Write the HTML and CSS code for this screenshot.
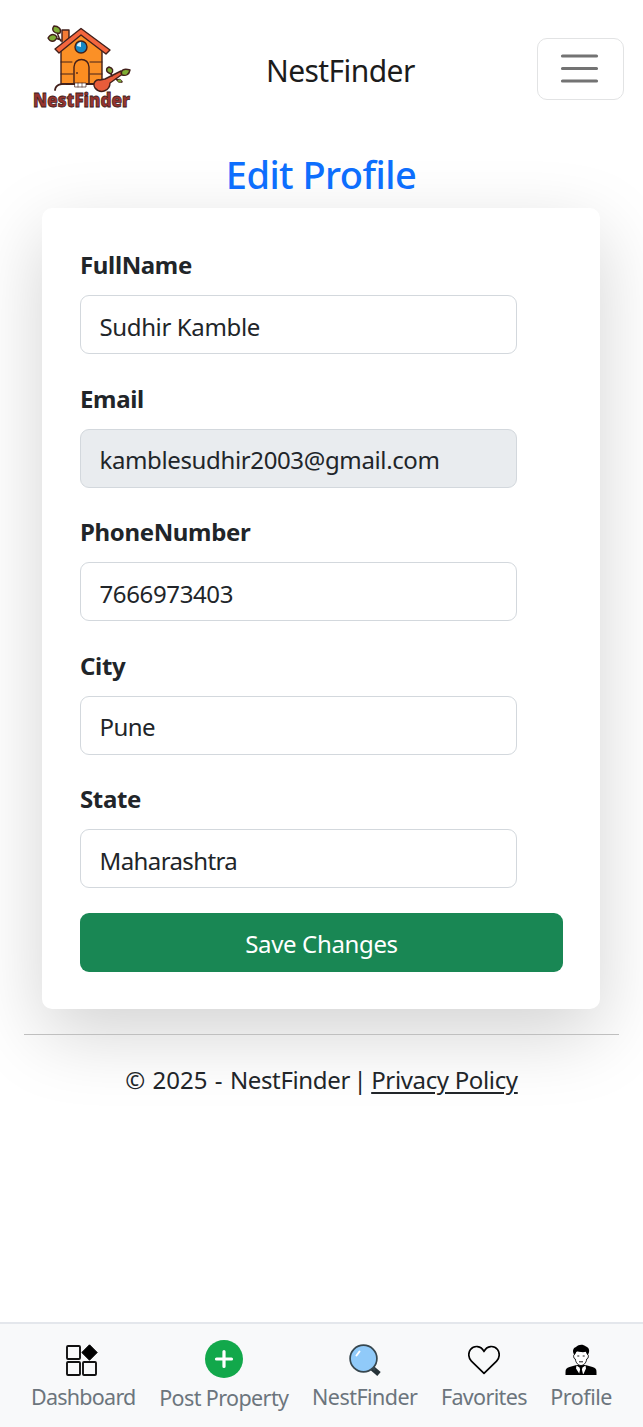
FILE: index.html
```html
<!DOCTYPE html>
<html lang="en">
<head>
<meta charset="utf-8">
<title>Edit Profile - NestFinder</title>
<link rel="stylesheet" href="styles.css">
</head>
<body>
<header class="topbar">
  <svg class="logo" viewBox="0 0 125 100" role="img" aria-label="NestFinder">
    <g stroke="#42201b" stroke-width="1.4" stroke-linejoin="round" stroke-linecap="round">
      <path d="M42 27V15h7v9" fill="#f47b35"/>
      <path d="M41 26c-3-3-3-8-5-11M41 25l-6-2" fill="none"/>
      <path d="M40 18c-6 1-9-3-6-7 4 0 8 3 6 7z" fill="#7fae35"/>
      <path d="M37 22c-2 6-7 5-9 1 3-5 7-4 9-1z" fill="#7fae35"/>
      <path d="M41 31l20-15 21 17v36H41z" fill="#fb9026"/>
      <path d="M41 47h11M41 59h12M70 47h12M70 59h12" fill="none" stroke-width="1"/>
      <path d="M54 69V52c0-10 15-10 15 0v17z" fill="#fb8d21"/>
      <path d="M35 34l26-20.500 29 21.500-4 4-25-19-22 18z" fill="#f4663e"/>
      <circle cx="61" cy="32" r="6" fill="#1688c4"/>
      <path d="M57 31c0-3 3-4 4-4v5z" fill="#d8f3fb" stroke="none"/>
      <circle cx="57" cy="58" r="1" fill="#633018" stroke="none"/>
      <path d="M35 75c1-7 8-6 13-6h27" fill="none" stroke-width="1.8"/>
      <path d="M55 68h11v4H55z" fill="#fff" stroke-width=".7"/>
      <path d="M58 68v4M62 68v4" stroke-width=".6"/>
      <path d="M75 73c-3-5 1-9 5-8l5-1 16-8 3 2-14 10c0 7-9 12-15 5z" fill="#e85c3a"/>
      <path d="M92 61l-2-5M96 64l6 3M101 58l5-1" fill="none"/>
      <path d="M91 59c-6-2-5-6-2-7 4 1 5 4 2 7z" fill="#7fae35"/>
      <path d="M102 60c-2-5 2-7 8-5-1 5-4 6-8 5z" fill="#7fae35"/>
      <path d="M97 65c3-2 5 0 5 2-3 1-5 0-5-2z" fill="#7fae35" stroke-width=".8"/>
    </g>
    <text class="logo-text" x="13" y="91.500" textLength="97" lengthAdjust="spacingAndGlyphs">NestFinder</text>
  </svg>
  <span class="brand">NestFinder</span>
  <button class="toggler" aria-label="Menu">
    <svg viewBox="0 0 46 46"><path d="M4.500 10h34M4.500 22.500h34M4.500 35h34"/></svg>
  </button>
</header>
<main class="content">
  <h1 class="title">Edit Profile</h1>
  <form class="card">
    <label class="label" for="name">FullName</label>
    <input class="field" id="name" value="Sudhir Kamble">
    <label class="label" for="email">Email</label>
    <input class="field field-readonly" id="email" value="kamblesudhir2003@gmail.com" readonly>
    <label class="label" for="phone">PhoneNumber</label>
    <input class="field" id="phone" value="7666973403">
    <label class="label" for="city">City</label>
    <input class="field field-place" id="city" value="Pune">
    <label class="label" for="state">State</label>
    <input class="field field-place" id="state" value="Maharashtra">
    <button class="save" type="button">Save Changes</button>
  </form>
</main>
<footer class="footer"><span class="year">© 2025 - </span>NestFinder<span class="bar"> | </span><a class="policy" href="#">Privacy Policy</a></footer>
<nav class="tabs">
  <a class="tab"><svg class="icon icon-dash" viewBox="0 0 32 32"><g fill="none" stroke="#111" stroke-width="1.9"><rect x="1" y="2" width="13" height="13" rx="1"/><rect x="1" y="18" width="13" height="13" rx="1"/><rect x="17" y="18" width="13" height="13" rx="1"/></g><path d="M23.500.8l7.700 7.700-7.700 7.700-7.700-7.700z" stroke="#000" stroke-linejoin="round"/></svg><span class="tab-dash">Dashboard</span></a>
  <a class="tab"><svg class="icon icon-plus" viewBox="0 0 38 38"><circle cx="19" cy="19" r="19" fill="#12a84b"/><path d="M19 11.500v15M11.500 19h15" stroke="#fff" stroke-width="3.200" stroke-linecap="round"/></svg><span class="tab-post">Post Property</span></a>
  <a class="tab"><svg class="icon" viewBox="0 0 32 32"><path d="M23 24l7 6" stroke="#263238" stroke-width="5.200"/><path d="M22 22l4 4" stroke="#37474f" stroke-width="2.500"/><circle cx="14.500" cy="14.500" r="13.400" fill="#90caf9" stroke="#37474f" stroke-width="1.700"/><path d="M7.500 11.500l3-4" fill="none" stroke="#fff" stroke-width="2" stroke-linecap="round"/></svg><span class="tab-find">NestFinder</span></a>
  <a class="tab"><svg class="icon" viewBox="0 0 32 32"><path d="M16 29.400L3.400 17.200C.2 14 0 8.700 2.500 5.500 6 1.200 13 1.300 16 7.500c3-6.200 10-6.300 13.500-2 2.500 3.200 2.300 8.500-.9 11.700z" fill="none" stroke="#000" stroke-width="1.700" stroke-linejoin="round"/></svg><span class="tab-fav">Favorites</span></a>
  <a class="tab"><svg class="icon" viewBox="0 0 32 32"><path d="M.5 31v-3c0-3 1-4 4-5l7-2h9l7 2c3 1 4 2 4 5v3z"/><path d="M11.500 21.500l4.500 3 4.500-3 .5 3-2.500 5.500h-4L11 24.500z" fill="#fff"/><path d="M14.500 23.500h3l-.6 2 1.300 5.500h-4.400l1.300-5.500z"/><path d="M9.500 10.500c-1.500 0-1 4.500.8 4.500.5 4 3 6.500 5.700 6.500s5.200-2.500 5.700-6.500c1.800 0 2.300-4.500.8-4.500L21 7H11z" fill="#fff" stroke="#000" stroke-width=".9"/><path d="M9.300 11C7 7 8 4 11 3c3-3 7-3 10-.5 3 1 4.500 4.500 1.700 8.500L21 7.500c-3 1.500-7 0-9-.5z"/><path d="M12.300 12h2M17.700 12h2M14 17.800h4" stroke="#000" stroke-width=".9"/></svg><span class="tab-prof">Profile</span></a>
</nav>
</body>
</html>
```
FILE: styles.css
```css
* { box-sizing: border-box; }
body { margin: 0; height: 1427px; display: flex; flex-direction: column; background: #fff; color: #212529; font-family: "Noto Sans", sans-serif; font-size: 24px; line-height: 37px; letter-spacing: -.35px; }
.topbar { display: flex; align-items: center; height: 137px; padding: 0 19px 0 20px; }
.logo { width: 125px; height: 100px; margin-top: -7px; }
.logo-text { font: 800 19px "Open Sans", sans-serif; letter-spacing: 0; fill: #98342f; stroke: #3d201c; stroke-width: .8px; }
.brand { margin-left: 121px; font-size: 30px; color: #1c1c1c; line-height: 46px; margin-top: 5px; letter-spacing: -.58px; }
.toggler { margin-left: auto; width: 87px; height: 62px; padding: 0; border: 1.5px solid #e2e3e4; border-radius: 10px; background: none; display: grid; place-items: center; }
.toggler svg { width: 46px; height: 46px; }
.toggler path { stroke: #737373; stroke-width: 3.2; stroke-linecap: round; }
.content { padding: 14px 43px 0 42px; }
.title { margin: 0 0 10px; font-size: 38px; line-height: 47px; font-weight: 550; text-align: center; color: #0d6efd; letter-spacing: -.55px; }
.card { height: 801px; padding: 38px 37px 0 38px; border-radius: 10px; background: #fff; box-shadow: 0 25px 75px rgba(0, 0, 0, .175); display: flex; flex-direction: column; align-items: flex-start; }
.label { font-weight: 700; line-height: 37px; margin-bottom: 12px; }
.field { width: 437px; height: 59px; flex: none; margin: 0 0 25.5px; padding: 3px 18.5px 0; border: 1.5px solid #d3d8dd; border-radius: 9px; font: inherit; letter-spacing: -.37px; color: #212529; background: #fff; outline: 0; }
.field-readonly { background: #e9ecef; }
.field-place { letter-spacing: -.6px; }
.save { width: 100%; height: 59px; margin-top: -1px; padding: 3px 0 0; border: 0; border-radius: 9px; background: #198754; color: #fff; font: inherit; letter-spacing: inherit; }
.footer { margin: 25px 24px 0; padding-top: 26px; border-top: 1.5px solid #bfbfbf; text-align: center; position: relative; white-space: nowrap; }
.year { letter-spacing: 0; word-spacing: 1.1px; }
.bar { word-spacing: -1px; margin-left: -1.5px; }
.policy { color: inherit; text-underline-offset: 3px; text-decoration-thickness: 2px; }
.tabs { margin-top: auto; height: 105px; border-top: 2px solid #e4e7ec; background: #f8f9fa; display: flex; justify-content: space-between; padding: 16px 31px 0; color: #6c757d; font-size: 21.5px; line-height: 34px; }
.tab { display: flex; flex-direction: column; align-items: center; white-space: nowrap; }
.tab-dash { letter-spacing: -.75px; }
.tab-post { letter-spacing: -.6px; }
.tab-find { letter-spacing: -.54px; }
.tab-fav { letter-spacing: -.66px; }
.tab-prof { letter-spacing: -.5px; }
.icon { width: 32px; height: 32px; margin: 4px 0; }
.icon-dash { margin-right: 2px; }
.icon-plus { width: 38px; height: 38px; margin: 0 0 3px; }
```
